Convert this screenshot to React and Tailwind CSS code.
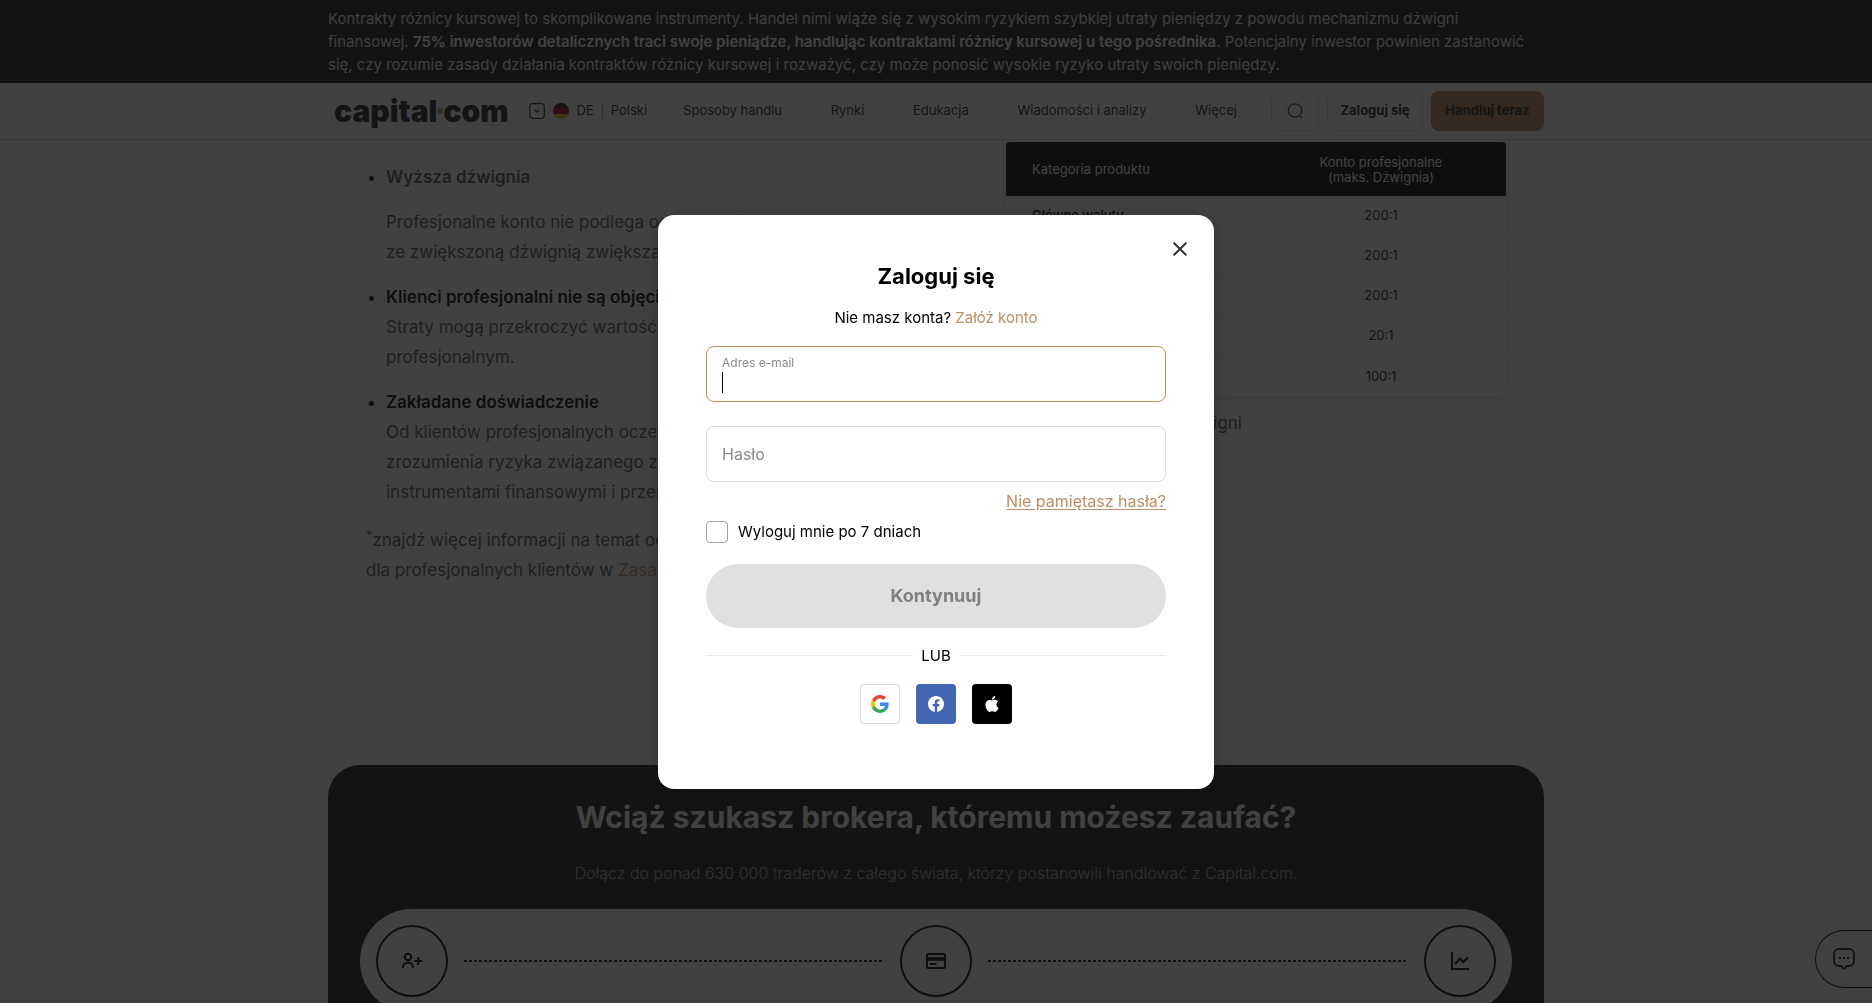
import React from "react";

const NAV = ["Sposoby handlu", "Rynki", "Edukacja", "Wiadomości i analizy", "Więcej"];

const ROWS = [
  ["Główne waluty", "200:1"],
  ["Główne indeksy", "200:1"],
  ["Złoto", "200:1"],
  ["Akcje", "20:1"],
  ["Towary", "100:1"],
];

function UserPlusIcon() {
  return (
    <svg width="24" height="24" viewBox="0 0 24 24" fill="none" stroke="currentColor" strokeWidth="2" aria-hidden="true">
      <circle cx="8" cy="8" r="3.2" />
      <path d="M3 19v-.6a5 5 0 0 1 10 0v.6M18.200 8v8M14.200 12h8" />
    </svg>
  );
}

function CardIcon() {
  return (
    <svg width="24" height="24" viewBox="0 0 24 24" fill="none" stroke="currentColor" strokeWidth="2" aria-hidden="true">
      <rect x="3" y="5" width="18" height="14" rx="1" />
      <path d="M3 10h18" strokeWidth="3.600" />
      <path d="M5.500 15h7" />
    </svg>
  );
}

function ChartIcon() {
  return (
    <svg width="24" height="24" viewBox="0 0 24 24" fill="none" stroke="currentColor" strokeWidth="2" aria-hidden="true">
      <path d="M4 3v17h17" />
      <path d="M7 15l5-5.500 3.200 3.500L20 8.500" />
    </svg>
  );
}

function Banner() {
  return (
    <div className="bg-[#1c1c1c] py-[7px]">
      <p className="mx-auto w-full max-w-[1216px] text-[15px] leading-[23px] text-[#eee]">
        Kontrakty różnicy kursowej to skomplikowane instrumenty. Handel nimi wiąże się z wysokim ryzykiem szybkiej utraty pieniędzy z powodu mechanizmu dźwigni
        <br />
        finansowej.{" "}
        <strong className="font-semibold text-white">
          75% inwestorów detalicznych traci swoje pieniądze, handlując kontraktami różnicy kursowej u tego pośrednika
        </strong>
        . Potencjalny inwestor powinien zastanowić
        <br />
        się, czy rozumie zasady działania kontraktów różnicy kursowej i rozważyć, czy może ponosić wysokie ryzyko utraty swoich pieniędzy.
      </p>
    </div>
  );
}

function Header() {
  return (
    <header className="border-b border-[#d8d8d8]">
      <div className="mx-auto flex h-14 w-full max-w-[1216px] items-center">
        <a href="#home" className="ml-[6px] flex items-center text-[30px] leading-8 font-black text-[#222]">
          <span>capital</span>
          <span className="size-[6px] rounded-full bg-[#c3976a]" />
          <span>com</span>
        </a>
        <button type="button" className="ml-5 flex items-center gap-2 text-[13px]">
          <svg width="16" height="16" viewBox="0 0 16 16" fill="none" stroke="#222" aria-hidden="true">
            <rect x="0.700" y="0.700" width="14.600" height="14.600" rx="3" strokeWidth="1.200" />
            <path d="M5.800 7l2.200 2 2.200-2" strokeWidth="1.200" />
          </svg>
          <span className="flex size-4 flex-col overflow-hidden rounded-full">
            <span className="h-[5px] bg-[#222]" />
            <span className="h-[6px] bg-[#b00010]" />
            <span className="h-[5px] bg-[#e0b020]" />
          </span>
          <span>DE</span>
          <span className="h-4 w-px bg-[#999]" />
          <span>Polski</span>
        </button>
        <nav className="ml-9 flex flex-1 justify-between text-[13px]">
          {NAV.map((item) => (
            <a key={item} href="#menu">
              {item}
            </a>
          ))}
        </nav>
        <div className="ml-[34px] flex gap-2 text-[13px] font-bold">
          <button type="button" aria-label="Szukaj" className="flex h-10 w-12 items-center justify-center rounded-lg border border-[#e2e2e2]">
            <svg width="16" height="16" viewBox="0 0 16 16" fill="none" stroke="#444" strokeWidth="1.300" aria-hidden="true">
              <circle cx="8" cy="7.500" r="6.700" />
              <path d="M12.500 12.500l2.500 2.700" />
            </svg>
          </button>
          <button type="button" className="h-10 w-24 rounded-lg border border-[#e2e2e2] whitespace-nowrap">
            Zaloguj się
          </button>
          <button type="button" className="h-10 w-[113px] rounded-lg bg-[#bb895c] text-[#222]">
            Handluj teraz
          </button>
        </div>
      </div>
    </header>
  );
}

function Article() {
  return (
    <main className="mx-auto flex h-[625px] w-full max-w-[1216px] justify-between overflow-hidden px-[38px]">
      <div className="w-[560px] pt-[22px] text-[17px] leading-[30px] whitespace-nowrap text-[#555]">
        <ul className="list-disc space-y-[15px] pl-5 marker:text-black">
          <li>
            <strong className="font-semibold">Wyższa dźwignia</strong>
            <p className="mt-[15px]">
              Profesjonalne konto nie podlega ograniczeniom, handel
              <br />
              ze zwiększoną dźwignią zwiększa jednak ryzyko strat.
            </p>
          </li>
          <li>
            <strong className="font-semibold text-black">Klienci profesjonalni nie są objęci ochroną salda</strong>
            <p>
              Straty mogą przekroczyć wartość środków na koncie
              <br />
              profesjonalnym.
            </p>
          </li>
          <li>
            <strong className="font-semibold text-black">Zakładane doświadczenie</strong>
            <p>
              Od klientów profesjonalnych oczekuje się większego
              <br />
              zrozumienia ryzyka związanego z handlem złożonymi
              <br />
              instrumentami finansowymi i przepisami rynku.
            </p>
          </li>
        </ul>
        <p className="mt-[18px]">
          <sup>*</sup>znajdź więcej informacji na temat ochrony dostępnej
          <br />
          dla profesjonalnych klientów w{" "}
          <a href="#rules" className="text-[#c3976a]">
            Zasadach ochrony
          </a>
        </p>
      </div>

      <div className="w-[500px] pt-[2px]">
        <table className="w-full overflow-hidden rounded text-[13px] shadow-[0_2px_8px_rgba(0,0,0,0.12)]">
          <thead className="h-[54px] bg-black leading-[15px] text-white">
            <tr>
              <th className="w-1/2 pt-[2px] pl-[26px] text-left font-normal">Kategoria produktu</th>
              <th className="w-1/2 pt-[2px] text-center font-normal">
                Konto profesjonalne
                <br />
                (maks. Dźwignia)
              </th>
            </tr>
          </thead>
          <tbody>
            {ROWS.map(([name, ratio]) => (
              <tr key={name} className="h-10 border-t border-[#e6e6e6] text-[#222]">
                <td className="pl-[26px] font-medium text-black">{name}</td>
                <td className="text-center">{ratio}</td>
              </tr>
            ))}
          </tbody>
        </table>
        <p className="mt-3 w-[236px] text-right text-[17px] leading-[30px] whitespace-nowrap text-[#555]">Maksymalny poziom dźwigni</p>
      </div>
    </main>
  );
}

function Step({ children }) {
  return (
    <div className="flex size-[72px] shrink-0 items-center justify-center rounded-full border-2 border-black text-black">{children}</div>
  );
}

function DottedLine() {
  return <div className="h-[2px] flex-1 bg-[repeating-linear-gradient(to_right,#000_0_3px,transparent_3px_5px)]" />;
}

function Promo() {
  return (
    <section className="mx-auto w-full max-w-[1216px] rounded-t-[32px] bg-[#1c1c1c] px-8 pt-8 text-center">
      <h2 className="text-[30px] leading-10 font-bold text-white">Wciąż szukasz brokera, któremu możesz zaufać?</h2>
      <p className="mt-6 text-base leading-6 font-light text-[#aaa]">
        Dołącz do ponad 630 000 traderów z całego świata, którzy postanowili handlować z Capital.com.
      </p>
      <div className="mt-6 flex items-center gap-4 rounded-full bg-white p-4">
        <Step>
          <UserPlusIcon />
        </Step>
        <DottedLine />
        <Step>
          <CardIcon />
        </Step>
        <DottedLine />
        <Step>
          <ChartIcon />
        </Step>
      </div>
    </section>
  );
}

function ChatButton() {
  return (
    <button
      type="button"
      aria-label="Czat"
      className="absolute right-0 bottom-[15px] flex h-[58px] w-[57px] items-center rounded-l-full border border-r-0 border-black bg-white pl-[17px]"
    >
      <svg width="22" height="22" viewBox="0 0 22 22" fill="none" stroke="#111" strokeWidth="1.800" aria-hidden="true">
        <path d="M6 1h10a5 5 0 0 1 5 5v7a5 5 0 0 1-5 5h-1.500c-1 0-1.500.5-2 1.500-.7 1.600-2.300 1.600-3 0-.5-1-1-1.500-2-1.500H6a5 5 0 0 1-5-5V6a5 5 0 0 1 5-5z" />
        <path d="M6 10h2M10 10h2M14 10h2" strokeWidth="2" />
      </svg>
    </button>
  );
}

function GoogleLogo() {
  return (
    <svg width="18" height="18" viewBox="0 0 48 48" aria-hidden="true">
      <path fill="#EA4335" d="M24 9.500c3.540 0 6.710 1.220 9.210 3.600l6.850-6.850C35.900 2.380 30.470 0 24 0 14.620 0 6.510 5.380 2.560 13.220l7.980 6.190C12.430 13.720 17.740 9.500 24 9.500z" />
      <path fill="#4285F4" d="M46.980 24.550c0-1.570-.15-3.090-.38-4.550H24v9.020h12.940c-.58 2.960-2.260 5.480-4.780 7.180l7.730 6c4.510-4.180 7.090-10.360 7.090-17.650z" />
      <path fill="#FBBC05" d="M10.530 28.590c-.48-1.450-.76-2.990-.76-4.590s.27-3.140.76-4.590l-7.980-6.190C.92 16.460 0 20.120 0 24c0 3.880.92 7.540 2.560 10.780l7.970-6.190z" />
      <path fill="#34A853" d="M24 48c6.480 0 11.930-2.130 15.890-5.810l-7.730-6c-2.150 1.450-4.920 2.300-8.160 2.300-6.260 0-11.570-4.220-13.470-9.910l-7.980 6.190C6.510 42.620 14.620 48 24 48z" />
    </svg>
  );
}

function FacebookLogo() {
  return (
    <svg width="16" height="16" viewBox="0 0 24 24" fill="white" aria-hidden="true">
      <path d="M24 12.070C24 5.410 18.630 0 12 0S0 5.400 0 12.070C0 18.100 4.390 23.100 10.130 24v-8.440H7.080v-3.490h3.040V9.410c0-3.020 1.800-4.700 4.540-4.700 1.310 0 2.680.24 2.680.24v2.970h-1.500c-1.500 0-1.960.93-1.960 1.890v2.260h3.320l-.53 3.500h-2.800V24C19.610 23.100 24 18.100 24 12.070z" />
    </svg>
  );
}

function AppleLogo() {
  return (
    <svg width="16" height="16" viewBox="0 0 24 24" fill="white" aria-hidden="true">
      <path d="M12.150 6.900c-.95 0-2.410-1.080-3.960-1.040-2.040.03-3.910 1.180-4.960 3.010-2.120 3.680-.55 9.100 1.510 12.090 1.010 1.450 2.210 3.090 3.790 3.040 1.520-.07 2.090-.99 3.930-.99 1.830 0 2.350.99 3.960.95 1.640-.03 2.680-1.480 3.680-2.950 1.160-1.690 1.640-3.320 1.660-3.410-.04-.01-3.180-1.220-3.220-4.860-.03-3.040 2.480-4.490 2.600-4.560-1.430-2.090-3.620-2.320-4.390-2.380-2-.16-3.680 1.090-4.610 1.090zM15.530 3.830c.84-1.010 1.400-2.430 1.250-3.830-1.210.05-2.660.8-3.530 1.820-.78.9-1.450 2.340-1.270 3.710 1.340.1 2.720-.69 3.560-1.700z" />
    </svg>
  );
}

function LoginModal() {
  return (
    <div
      role="dialog"
      aria-modal="true"
      aria-labelledby="login-title"
      className="relative w-[556px] rounded-2xl bg-white px-12 pt-[47px] pb-[65px] text-black shadow-[0_4px_16px_rgba(0,0,0,0.25)]"
    >
      <button type="button" aria-label="Zamknij" className="absolute top-[22px] right-[22px] flex size-6 items-center justify-center">
        <svg width="14" height="14" viewBox="0 0 14 14" fill="none" stroke="#333" strokeWidth="2" aria-hidden="true">
          <path d="M.7.7l12.600 12.600M13.300.7L.7 13.300" />
        </svg>
      </button>

      <h1 id="login-title" className="text-center text-[22px] leading-7 font-bold">
        Zaloguj się
      </h1>
      <p className="mt-4 text-center text-[15px] leading-6">
        Nie masz konta?{" "}
        <a href="#signup" className="text-[#bd8f62]">
          Załóż konto
        </a>
      </p>

      <form onSubmit={(e) => e.preventDefault()}>
        <div className="mt-4 flex h-14 flex-col rounded-lg border border-[#bd8f62] px-[15px] pt-2">
          <label htmlFor="email" className="text-xs leading-4 text-[#8a8a8a]">
            Adres e-mail
          </label>
          <span className="flex h-[22px] items-end">
            <span className="h-[21px] w-px bg-black" />
            <input id="email" type="email" className="w-full text-[15px] caret-transparent outline-none" />
          </span>
        </div>
        <label htmlFor="password" className="sr-only">
          Hasło
        </label>
        <input
          id="password"
          type="password"
          placeholder="Hasło"
          className="mt-6 block h-14 w-full rounded-lg border border-[#dcdcdc] px-[15px] text-base outline-none placeholder:text-[#8a8a8a]"
        />
        <div className="mt-[7px] text-right">
          <a href="#reset" className="text-base leading-6 text-[#bd8f62] underline underline-offset-2">
            Nie pamiętasz hasła?
          </a>
        </div>
        <div className="mt-[7px] flex items-center gap-[10px]">
          <input id="logout" type="checkbox" className="size-[22px] appearance-none rounded border border-[#a0a0a8] bg-white" />
          <label htmlFor="logout" className="text-[15px] leading-6">
            Wyloguj mnie po 7 dniach
          </label>
        </div>
        <button type="submit" className="mt-[20px] h-16 w-full rounded-full bg-[#e0e0e0] text-lg font-bold text-[#808080]">
          Kontynuuj
        </button>
      </form>

      <div className="mt-4 flex items-center gap-2 text-[15px] leading-6">
        <span className="h-px flex-1 bg-[#ebebeb]" />
        LUB
        <span className="h-px flex-1 bg-[#ebebeb]" />
      </div>

      <div className="mt-4 flex justify-center gap-4">
        <button type="button" aria-label="Google" className="flex size-10 items-center justify-center rounded border border-[#dcdcdf]">
          <GoogleLogo />
        </button>
        <button type="button" aria-label="Facebook" className="flex size-10 items-center justify-center rounded bg-[#4267b2]">
          <FacebookLogo />
        </button>
        <button type="button" aria-label="Apple" className="flex size-10 items-center justify-center rounded bg-black">
          <AppleLogo />
        </button>
      </div>
    </div>
  );
}

export default function App() {
  return (
    <div className="relative h-screen overflow-hidden bg-white font-['Inter','Noto_Sans',sans-serif] text-[#222]">
      <Banner />
      <Header />
      <Article />
      <Promo />
      <ChatButton />
      <div className="fixed inset-0 flex items-center justify-center bg-[#111111]/80">
        <LoginModal />
      </div>
    </div>
  );
}
